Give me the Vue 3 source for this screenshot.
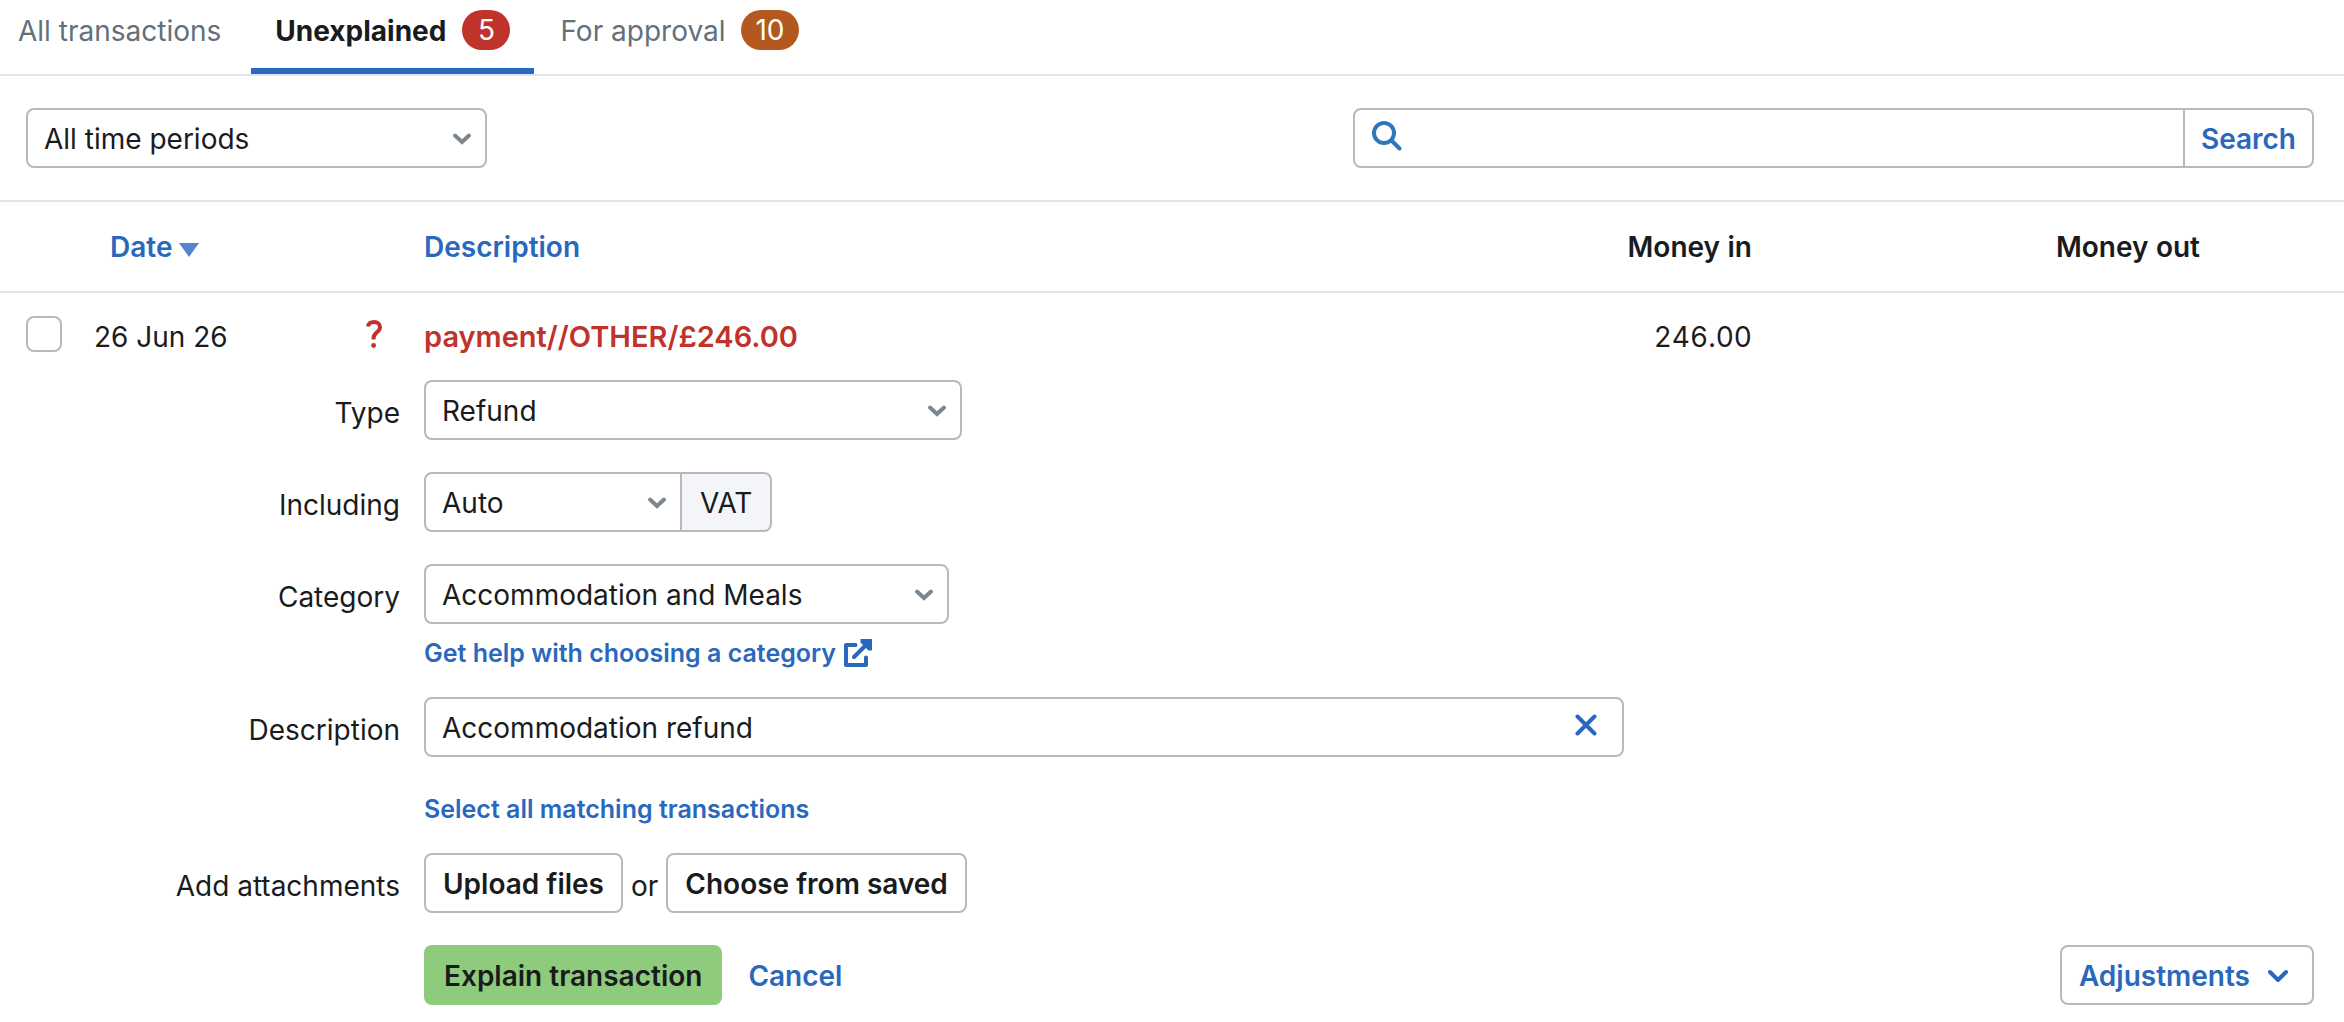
<script setup>
import { ref } from 'vue'

const period = ref('All time periods')
const query = ref('')
const selected = ref(false)
const type = ref('Refund')
const vat = ref('Auto')
const category = ref('Accommodation and Meals')
const description = ref('Accommodation refund')
</script>

<template>
  <main class="page">
    <nav class="tabs" aria-label="Transactions">
      <a href="#all" class="tab">All transactions</a>
      <a href="#unexplained" class="tab active" aria-current="page">
        Unexplained <span class="badge red">5</span>
      </a>
      <a href="#approval" class="tab">
        For approval <span class="badge orange">10</span>
      </a>
    </nav>

    <form class="filters" @submit.prevent>
      <div class="select period">
        <select v-model="period" aria-label="Time period">
          <option>All time periods</option>
        </select>
        <svg class="chevron" viewBox="0 0 20 14"><path d="M3 3.500l7 6.500 7-6.500" /></svg>
      </div>
      <div class="search">
        <svg class="magnifier" viewBox="0 0 32 32">
          <circle cx="13" cy="13" r="10" /><path d="M20.500 20.500l8 8" />
        </svg>
        <input v-model="query" type="text" aria-label="Search transactions" />
        <button type="submit">Search</button>
      </div>
    </form>

    <table class="transactions">
      <colgroup>
        <col class="col-check" /><col class="col-date" /><col class="col-flag" />
        <col /><col class="col-in" /><col class="col-out" />
      </colgroup>
      <thead>
        <tr>
          <th></th>
          <th class="date-head">
            <a href="#date">Date<svg class="sort" viewBox="0 0 20 14"><path d="M0 0h20L10 14z" /></svg></a>
          </th>
          <th></th>
          <th><a href="#description">Description</a></th>
          <th class="number">Money in</th>
          <th class="number">Money out</th>
        </tr>
      </thead>
      <tbody>
        <tr>
          <td class="check-cell">
            <input v-model="selected" type="checkbox" class="checkbox" aria-label="Select transaction" />
          </td>
          <td>26 Jun 26</td>
          <td>
            <svg class="question" viewBox="0 0 18 30">
              <path d="M3 7.500C3.500 4.500 6 3 9 3c3.600 0 6 2 6 5.200 0 5-6.400 5.400-6.400 10.800v1.500" />
              <circle cx="8.600" cy="26.500" r="2.400" />
            </svg>
          </td>
          <td><span class="payee">payment//OTHER/£246.00</span></td>
          <td class="number">246.00</td>
          <td></td>
        </tr>
      </tbody>
    </table>

    <form class="explain" @submit.prevent>
      <div class="row">
        <label for="type">Type</label>
        <div class="select type">
          <select id="type" v-model="type"><option>Refund</option></select>
          <svg class="chevron" viewBox="0 0 20 14"><path d="M3 3.500l7 6.500 7-6.500" /></svg>
        </div>
      </div>

      <div class="row">
        <label for="vat">Including</label>
        <div class="vat-group">
          <div class="select vat">
            <select id="vat" v-model="vat"><option>Auto</option></select>
            <svg class="chevron" viewBox="0 0 20 14"><path d="M3 3.500l7 6.500 7-6.500" /></svg>
          </div>
          <span class="addon">VAT</span>
        </div>
      </div>

      <div class="row category-row">
        <label for="category">Category</label>
        <div>
          <div class="select category">
            <select id="category" v-model="category"><option>Accommodation and Meals</option></select>
            <svg class="chevron" viewBox="0 0 20 14"><path d="M3 3.500l7 6.500 7-6.500" /></svg>
          </div>
          <a href="#help" class="small-link help">
            Get help with choosing a category
            <svg class="external" viewBox="0 0 28 28">
              <path d="M11.500 6H2v20h20v-7.500" />
              <path d="M10 18L23 5" />
              <path class="head" d="M16.500 0H28v11.500h-3.600L16.500 3.600z" />
            </svg>
          </a>
        </div>
      </div>

      <div class="row description-row">
        <label for="description">Description</label>
        <div>
          <div class="description">
            <input id="description" v-model="description" type="text" />
            <button type="button" class="clear" aria-label="Clear description" @click="description = ''">
              <svg viewBox="0 0 22 22"><path d="M2.500 2.500l17 17M19.500 2.500l-17 17" /></svg>
            </button>
          </div>
          <a href="#matching" class="small-link matching">Select all matching transactions</a>
        </div>
      </div>

      <div class="row" role="group" aria-labelledby="attachments">
        <span id="attachments" class="label">Add attachments</span>
        <div class="attachments">
          <button type="button" class="button">Upload files</button>
          <span class="or">or</span>
          <button type="button" class="button">Choose from saved</button>
        </div>
      </div>

      <div class="actions">
        <button type="submit" class="button primary">Explain transaction</button>
        <a href="#cancel" class="cancel">Cancel</a>
        <button type="button" class="button adjustments">
          Adjustments
          <svg class="chevron-inline" viewBox="0 0 20 14"><path d="M2 3l8 8 8-8" /></svg>
        </button>
      </div>
    </form>
  </main>
</template>

<style>
body {
  background: #fff;
}
</style>

<style scoped>
.page,
.page * {
  box-sizing: border-box;
}

.page {
  color: #1a1b1d;
  font: 400 28px/34px Inter, "Noto Sans", sans-serif;
}

a {
  color: #2a68bd;
  text-decoration: none;
}

input,
select,
button {
  margin: 0;
  color: inherit;
  font: inherit;
}

button {
  cursor: pointer;
}

svg {
  flex: none;
  fill: none;
}

.tabs {
  display: flex;
  gap: 2px;
  height: 76px;
  border-bottom: 2px solid #e4e4ea;
}

.tab {
  display: flex;
  gap: 16px;
  align-items: flex-start;
  padding: 14px 24px 0;
  color: #63707b;
}

.tab:first-child {
  padding: 14px 28px 0 18px;
}

.active {
  border-bottom: 6px solid #2a68bd;
  color: #1a1b1d;
  font-weight: 700;
}

.badge {
  min-width: 48px;
  height: 40px;
  margin-top: -4px;
  padding: 0 14px;
  border-radius: 20px;
  color: #fff;
  font-weight: 400;
  line-height: 40px;
  text-align: center;
}

.red {
  background: #c0332b;
}

.orange {
  background: #b3581f;
}

.filters {
  display: flex;
  justify-content: space-between;
  padding: 32px 30px 32px 26px;
  border-bottom: 2px solid #e4e4ea;
}

.select {
  position: relative;
}

.select select {
  width: 100%;
  height: 60px;
  padding: 2px 16px 0;
  border: 2px solid #b5bac1;
  border-radius: 8px;
  background: #fff;
  appearance: none;
}

.chevron {
  position: absolute;
  top: 24px;
  right: 15px;
  width: 20px;
  height: 14px;
  stroke: #7b8790;
  stroke-width: 4;
  stroke-linecap: round;
  pointer-events: none;
}

.period {
  width: 461px;
}

.search {
  display: flex;
  align-items: center;
  width: 42%;
  height: 60px;
  border: 2px solid #b5bac1;
  border-radius: 8px;
}

.magnifier {
  width: 32px;
  height: 32px;
  margin: 0 8px 4px 16px;
  stroke: #2f76bd;
  stroke-width: 4;
  stroke-linecap: round;
}

.search input {
  flex: 1;
  min-width: 0;
  height: 56px;
  padding: 2px 0 0;
  border: 0;
  background: none;
}

.search button {
  height: 56px;
  padding: 2px 16px 0;
  border: 0;
  border-left: 2px solid #b5bac1;
  background: none;
  color: #2a68bd;
  font-weight: 600;
}

.transactions {
  width: 100%;
  border-collapse: collapse;
  table-layout: fixed;
}

.col-check {
  width: 94px;
}

.col-date {
  width: 271px;
}

.col-flag {
  width: 59px;
}

.col-in {
  width: 19%;
}

.col-out {
  width: 592px;
}

th,
td {
  padding: 0;
  text-align: left;
}

th {
  height: 90px;
  border-bottom: 2px solid #e4e4ea;
  font-weight: 600;
}

.date-head {
  padding-left: 16px;
}

.sort {
  width: 20px;
  height: 14px;
  margin-left: 7px;
  fill: #5585cd;
}

td {
  height: 88px;
}

.number {
  text-align: right;
  font-variant-numeric: tabular-nums;
}

.number:last-child {
  padding-right: 144px;
}

.check-cell {
  padding-left: 26px;
}

.checkbox {
  display: block;
  width: 36px;
  height: 36px;
  margin-bottom: 6px;
  border: 2px solid #b5bac1;
  border-radius: 8px;
  background: #fff;
  appearance: none;
}

.checkbox:checked {
  background: #2a68bd;
}

.question {
  display: block;
  width: 18px;
  height: 30px;
  margin-bottom: 6px;
  stroke: #c0332b;
  stroke-width: 4;
}

.question circle {
  fill: #c0332b;
  stroke: none;
}

.payee {
  color: #c0332b;
  font-size: 29px;
  font-weight: 600;
}

.explain {
  padding: 0 30px 16px 26px;
}

.row {
  display: flex;
  gap: 24px;
  margin-bottom: 32px;
}

.category-row {
  margin-bottom: 26px;
}

.row > label,
.row > .label {
  width: 374px;
  padding-top: 16px;
  text-align: right;
}

.type {
  width: 538px;
}

.vat-group {
  display: flex;
}

.vat {
  width: 258px;
}

.vat select {
  border-radius: 8px 0 0 8px;
}

.addon {
  height: 60px;
  padding: 1px 18px 0;
  border: 2px solid #b5bac1;
  border-left: 0;
  border-radius: 0 8px 8px 0;
  background: #f3f5f8;
  line-height: 56px;
}

.category {
  width: 525px;
}

.small-link {
  font-size: 25px;
  font-weight: 600;
}

.help {
  display: flex;
  gap: 8px;
  margin-top: 11px;
  line-height: 36px;
}

.external {
  width: 28px;
  height: 28px;
  margin-top: 4px;
  stroke: #2a68bd;
  stroke-width: 4;
  stroke-linecap: round;
  stroke-linejoin: round;
}

.external .head {
  fill: #2a68bd;
  stroke: none;
}

.description {
  position: relative;
  width: 1200px;
}

.description input {
  display: block;
  width: 100%;
  height: 60px;
  padding: 2px 64px 0 16px;
  border: 2px solid #b5bac1;
  border-radius: 8px;
}

.clear {
  position: absolute;
  top: 12px;
  right: 20px;
  width: 36px;
  height: 32px;
  padding: 0 7px;
  border: 0;
  background: none;
}

.clear svg {
  display: block;
  width: 22px;
  height: 22px;
  stroke: #2a68bd;
  stroke-width: 4;
  stroke-linecap: round;
}

.matching {
  display: block;
  margin-top: 36px;
  line-height: 32px;
}

.description-row {
  margin-bottom: 28px;
}

.attachments {
  display: flex;
  gap: 8px;
}

.or {
  padding-top: 16px;
}

.button {
  height: 60px;
  padding: 2px 17px 0;
  border: 2px solid #b5bac1;
  border-radius: 8px;
  background: #fff;
  font-weight: 600;
}

.actions {
  display: flex;
  gap: 26px;
  align-items: center;
  padding-left: 398px;
}

.primary {
  padding: 2px 20px 0;
  border: 0;
  background: #8ecb7c;
}

.cancel {
  padding-top: 2px;
  font-weight: 600;
}

.adjustments {
  display: flex;
  gap: 18px;
  align-items: center;
  margin-left: auto;
  padding-right: 24px;
  color: #2a68bd;
}

.chevron-inline {
  width: 20px;
  height: 14px;
  stroke: #2a68bd;
  stroke-width: 4;
  stroke-linecap: round;
  stroke-linejoin: round;
}
</style>
